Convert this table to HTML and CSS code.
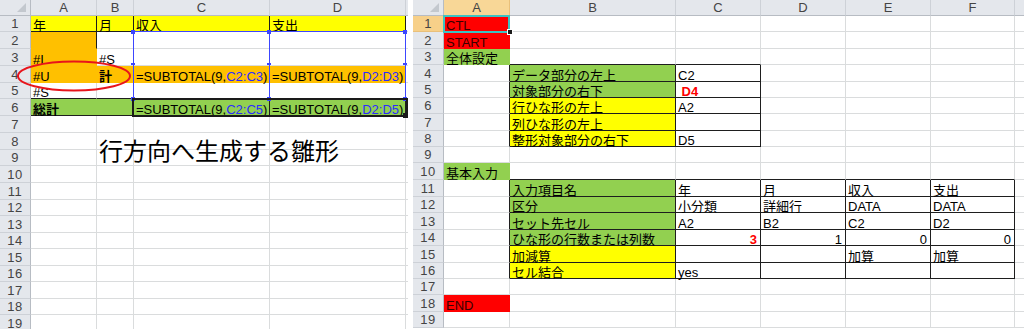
FILE: index.html
```html
<!DOCTYPE html>
<html lang="ja">
<head>
<meta charset="utf-8">
<title>Sheets</title>
<link rel="stylesheet" href="styles.css">
</head>
<body>
<div class="sheet left">
  <div class="hc"></div><div class="ch">A</div><div class="ch">B</div><div class="ch">C</div><div class="ch">D</div><div class="ch e"></div>

  <div class="rh">1</div><div class="c y bk">年</div><div class="c y bk">月</div><div class="c y bk">収入</div><div class="c y bk">支出</div><div class="c e"></div>
  <div class="rh">2</div><div class="c o br"></div><div class="c"></div><div class="c"></div><div class="c"></div><div class="c e"></div>
  <div class="rh">3</div><div class="c o">#I</div><div class="c">#S</div><div class="c"></div><div class="c"></div><div class="c e"></div>
  <div class="rh">4</div><div class="c o">#U</div><div class="c o b">計</div><div class="c o"><span>=SUBTOTAL(9,<span class="ref">C2:C3</span>)</span></div><div class="c o"><span>=SUBTOTAL(9,<span class="ref">D2:D3</span>)</span></div><div class="c e"></div>
  <div class="rh">5</div><div class="c bb">#S</div><div class="c bb"></div><div class="c bb"></div><div class="c bb"></div><div class="c e"></div>
  <div class="rh">6</div><div class="c g bk b span2">総計</div><div class="c g bk"><span>=SUBTOTAL(9,<span class="ref">C2:C5</span>)</span></div><div class="c g bk"><span>=SUBTOTAL(9,<span class="ref">D2:D5</span>)</span></div><div class="c e"></div>
  <div class="rh">7</div><div class="c"></div><div class="c"></div><div class="c"></div><div class="c"></div><div class="c e"></div>
  <div class="rh">8</div><div class="c"></div><div class="c"></div><div class="c"></div><div class="c"></div><div class="c e"></div>
  <div class="rh">9</div><div class="c"></div><div class="c"></div><div class="c"></div><div class="c"></div><div class="c e"></div>
  <div class="rh">10</div><div class="c"></div><div class="c"></div><div class="c"></div><div class="c"></div><div class="c e"></div>
  <div class="rh">11</div><div class="c"></div><div class="c"></div><div class="c"></div><div class="c"></div><div class="c e"></div>
  <div class="rh">12</div><div class="c"></div><div class="c"></div><div class="c"></div><div class="c"></div><div class="c e"></div>
  <div class="rh">13</div><div class="c"></div><div class="c"></div><div class="c"></div><div class="c"></div><div class="c e"></div>
  <div class="rh">14</div><div class="c"></div><div class="c"></div><div class="c"></div><div class="c"></div><div class="c e"></div>
  <div class="rh">15</div><div class="c"></div><div class="c"></div><div class="c"></div><div class="c"></div><div class="c e"></div>
  <div class="rh">16</div><div class="c"></div><div class="c"></div><div class="c"></div><div class="c"></div><div class="c e"></div>
  <div class="rh">17</div><div class="c"></div><div class="c"></div><div class="c"></div><div class="c"></div><div class="c e"></div>
  <div class="rh">18</div><div class="c"></div><div class="c"></div><div class="c"></div><div class="c"></div><div class="c e"></div>
  <div class="rh">19</div><div class="c"></div><div class="c"></div><div class="c"></div><div class="c"></div><div class="c e"></div>

  <div class="rng rng-h"></div>
  <div class="rng rng-v v1"></div>
  <div class="rng rng-v v2"></div>
  <div class="rng rng-v v3"></div>
  <div class="hd sq x1 t"></div><div class="hd sq x2 t"></div><div class="hd sq x3 t"></div>
  <div class="hd tk x1 m"></div><div class="hd tk x2 m"></div><div class="hd tk x3 m"></div>
  <div class="hd sq x1 bt"></div><div class="hd sq x2 bt"></div><div class="hd sq x3 bt"></div>
  <div class="active"></div>
  <div class="fill-handle"></div>
  <svg class="ring" width="118" height="34" viewBox="0 0 118 34"><ellipse cx="59" cy="17" rx="56" ry="14.5" fill="none" stroke="#e8141b" stroke-width="2"/></svg>
  <div class="caption">行方向へ生成する雛形</div>
</div>

<div class="sheet right">
  <div class="hc"></div><div class="ch sel">A</div><div class="ch">B</div><div class="ch">C</div><div class="ch">D</div><div class="ch">E</div><div class="ch">F</div><div class="ch e"></div>

  <div class="rh sel">1</div><div class="c r">CTL</div><div class="c"></div><div class="c"></div><div class="c"></div><div class="c"></div><div class="c"></div><div class="c e"></div>
  <div class="rh">2</div><div class="c r">START</div><div class="c"></div><div class="c"></div><div class="c"></div><div class="c"></div><div class="c"></div><div class="c e"></div>
  <div class="rh">3</div><div class="c g">全体設定</div><div class="c bb"></div><div class="c bb"></div><div class="c"></div><div class="c"></div><div class="c"></div><div class="c e"></div>
  <div class="rh">4</div><div class="c br"></div><div class="c g bk">データ部分の左上</div><div class="c bk">C2</div><div class="c"></div><div class="c"></div><div class="c"></div><div class="c e"></div>
  <div class="rh">5</div><div class="c br"></div><div class="c g bk">対象部分の右下</div><div class="c bk red b">&nbsp;D4</div><div class="c"></div><div class="c"></div><div class="c"></div><div class="c e"></div>
  <div class="rh">6</div><div class="c br"></div><div class="c y bk">行ひな形の左上</div><div class="c bk">A2</div><div class="c"></div><div class="c"></div><div class="c"></div><div class="c e"></div>
  <div class="rh">7</div><div class="c br"></div><div class="c y bk">列ひな形の左上</div><div class="c bk"></div><div class="c"></div><div class="c"></div><div class="c"></div><div class="c e"></div>
  <div class="rh">8</div><div class="c br"></div><div class="c y bk">整形対象部分の右下</div><div class="c bk">D5</div><div class="c"></div><div class="c"></div><div class="c"></div><div class="c e"></div>
  <div class="rh">9</div><div class="c"></div><div class="c"></div><div class="c"></div><div class="c"></div><div class="c"></div><div class="c"></div><div class="c e"></div>
  <div class="rh">10</div><div class="c g">基本入力</div><div class="c bb"></div><div class="c bb"></div><div class="c bb"></div><div class="c bb"></div><div class="c bb"></div><div class="c e"></div>
  <div class="rh">11</div><div class="c br"></div><div class="c g bk">入力項目名</div><div class="c bk">年</div><div class="c bk">月</div><div class="c bk">収入</div><div class="c bk">支出</div><div class="c e"></div>
  <div class="rh">12</div><div class="c br"></div><div class="c g bk">区分</div><div class="c bk">小分類</div><div class="c bk">詳細行</div><div class="c bk">DATA</div><div class="c bk">DATA</div><div class="c e"></div>
  <div class="rh">13</div><div class="c br"></div><div class="c g bk">セット先セル</div><div class="c bk">A2</div><div class="c bk">B2</div><div class="c bk">C2</div><div class="c bk">D2</div><div class="c e"></div>
  <div class="rh">14</div><div class="c br"></div><div class="c g bk">ひな形の行数または列数</div><div class="c bk num red b">3</div><div class="c bk num">1</div><div class="c bk num">0</div><div class="c bk num">0</div><div class="c e"></div>
  <div class="rh">15</div><div class="c br"></div><div class="c y bk">加減算</div><div class="c bk"></div><div class="c bk"></div><div class="c bk">加算</div><div class="c bk">加算</div><div class="c e"></div>
  <div class="rh">16</div><div class="c br"></div><div class="c y bk">セル結合</div><div class="c bk">yes</div><div class="c bk"></div><div class="c bk"></div><div class="c bk"></div><div class="c e"></div>
  <div class="rh">17</div><div class="c"></div><div class="c"></div><div class="c"></div><div class="c"></div><div class="c"></div><div class="c"></div><div class="c e"></div>
  <div class="rh">18</div><div class="c r">END</div><div class="c"></div><div class="c"></div><div class="c"></div><div class="c"></div><div class="c"></div><div class="c e"></div>
  <div class="rh">19</div><div class="c"></div><div class="c"></div><div class="c"></div><div class="c"></div><div class="c"></div><div class="c"></div><div class="c e"></div>

  <div class="cursor"></div>
  <div class="cursor-handle"></div>
</div>
</body>
</html>
```

FILE: styles.css
```css
* { box-sizing: border-box; margin: 0; padding: 0; }
html, body { width: 1024px; height: 329px; overflow: hidden; background: #fff; }
body {
  display: flex;
  gap: 5px;
  font-family: "Liberation Sans", "Noto Sans CJK JP", sans-serif;
  font-size: 13px;
  color: #000;
}

.sheet { position: relative; display: grid; height: 329px; overflow: hidden; flex: none; }
.left {
  width: 408px;
  grid-template-columns: 31px 66px 37px 136px 136px 2px;
  grid-template-rows: 16px 16px 17px 17px 17px 16px 17px 17px 17px 16px 17px 17px 16px 17px 16px 17px 16px 17px 16px 17px;
}
.right {
  width: 611px;
  grid-template-columns: 31px 66px 166px 85px 85px 85px 84px 9px;
  grid-template-rows: 16px 16px 17px 16px 17px 16px 16px 17px 16px 16px 17px 17px 16px 17px 16px 17px 16px 16px 17px 16px;
}

/* headers */
.hc, .ch, .rh { background: #e4e7ec; color: #444; font-size: 13px; }
.hc { position: relative; border-right: 1px solid #b7bcc3; border-bottom: 1px solid #b7bcc3; }
.hc::after {
  content: "";
  position: absolute;
  right: 4px;
  bottom: 3px;
  width: 9px;
  height: 9px;
  background: #c3c8ce;
  clip-path: polygon(100% 0, 100% 100%, 0 100%);
}
.ch {
  display: flex; align-items: center; justify-content: center;
  border-right: 1px solid #cdd1d7; border-bottom: 1px solid #b7bcc3;
  overflow: hidden; line-height: 15px;
}
.rh {
  display: flex; align-items: center; justify-content: center;
  border-right: 1px solid #b7bcc3; border-bottom: 1px solid #cdd1d7;
  letter-spacing: 0.5px; line-height: 15px;
}
.ch.sel { background: #f8d797; border-bottom-color: #e9a53c; border-right-color: #e9c07a; }
.rh.sel { background: #f7d089; border-right-color: #e9a53c; border-bottom-color: #e9c07a; }

/* cells */
.c {
  display: flex;
  align-items: flex-end;
  padding-left: 2px;
  line-height: 11px;
  white-space: nowrap;
  min-width: 0;
  border-right: 1px solid #dadcdd;
  border-bottom: 1px solid #dadcdd;
}
.c.e, .ch.e { border-right: 0; }
.span2 { grid-column: span 2; }

.y { background: #ffff00; border-color: #ffff00; }
.o { background: #ffc000; border-color: #ffc000; }
.g { background: #92d050; border-color: #92d050; }
.r { background: #ff0000; border-color: #ff0000; color: #3a0000; }

.bk { border-right-color: #1e1e1e; border-bottom-color: #1e1e1e; }
.bb { border-bottom-color: #1e1e1e; }
.br { border-right-color: #1e1e1e; }

.b { font-weight: bold; }
.red { color: #ff0000; }
.num { justify-content: flex-end; padding-right: 3px; }
.ref { color: #2b2bff; }

/* formula reference highlight (left sheet) */
.rng { position: absolute; background: #3c46ff; }
.rng-h { left: 133px; top: 31px; width: 273px; height: 1px; }
.rng-v { top: 31px; width: 1px; height: 68px; }
.v1 { left: 133px; }
.v2 { left: 269px; }
.v3 { left: 405px; }
.hd { position: absolute; background: #3c46ff; }
.sq { width: 4px; height: 4px; }
.tk { width: 4px; height: 2px; }
.x1 { left: 131px; }
.x2 { left: 267px; }
.x3 { left: 403px; }
.t { top: 30px; }
.m { top: 63px; }
.bt { top: 97px; }

.active {
  position: absolute;
  left: 132px; top: 98px;
  width: 276px; height: 19px;
  border: 2px solid #1a1a1a;
}
.fill-handle {
  position: absolute;
  left: 403px; top: 113px;
  width: 5px; height: 5px;
  background: #1a1a1a;
}

.ring { position: absolute; left: 15px; top: 59px; }
.caption {
  position: absolute;
  left: 99px; top: 138px;
  font-family: "Noto Sans CJK JP", sans-serif;
  font-size: 24px;
  line-height: 24px;
  white-space: nowrap;
}

/* right sheet cursor on A1 */
.cursor {
  position: absolute;
  left: 30px; top: 15px;
  width: 67px; height: 18px;
  border: 2px solid #3cc3c3;
}
.cursor-handle {
  position: absolute;
  left: 95px; top: 30px;
  width: 4px; height: 4px;
  background: #1a1a1a;
  outline: 1px solid #fff;
}
```
